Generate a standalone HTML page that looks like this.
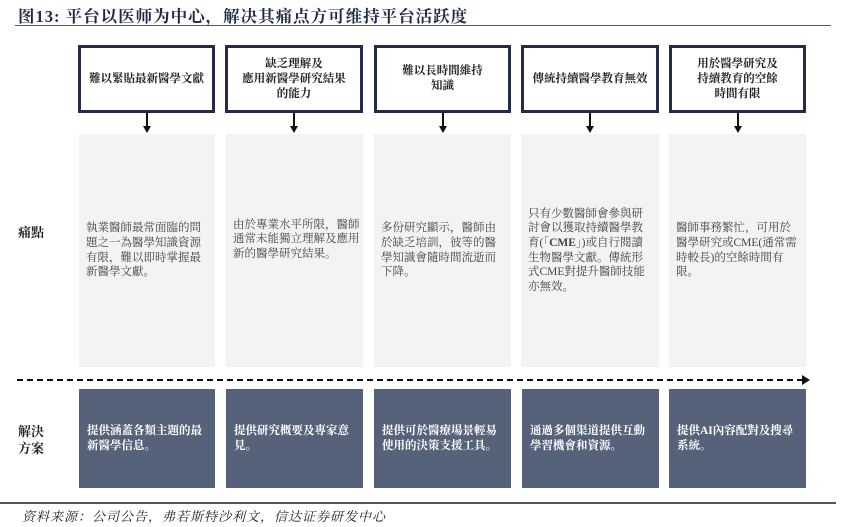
<!DOCTYPE html>
<html><head><meta charset="utf-8"><style>
*{margin:0;padding:0;box-sizing:border-box}
body{width:841px;height:527px;background:#fff;position:relative;overflow:hidden;font-family:"Liberation Serif","Noto Serif CJK SC",serif;color:#222}
.a{position:absolute}
.title{left:18px;top:3px;font-size:16.5px;font-weight:bold;color:#1f2a4a;letter-spacing:1px;font-family:"Liberation Serif","Noto Serif CJK SC",serif}
.hb{position:absolute;top:45px;height:68px;border:3px solid #222b4a;display:flex;align-items:center;justify-content:center;text-align:center;font-size:11.5px;font-weight:bold;line-height:15px;color:#222}
.gb{position:absolute;top:134px;height:233px;background:#f3f3f3;display:flex;align-items:center;padding:0 6px 0 7px;font-size:11.5px;line-height:14.6px;color:#444}
.bb{position:absolute;top:389px;height:99px;background:#56627a;display:flex;align-items:center;padding:0 7px 0 8px;font-size:11.5px;line-height:15px;color:#fff;font-weight:bold}
.ar{position:absolute;top:113px;width:2px;height:14px;background:#111}
.ah{position:absolute;top:126px;width:0;height:0;border-left:4px solid transparent;border-right:4px solid transparent;border-top:7px solid #111}
</style></head><body>
<div class="a title">图13: 平台以医师为中心，解决其痛点方可维持平台活跃度</div>
<div class="a" style="left:15px;top:25px;width:816px;height:1px;background:#555"></div>

<div class="hb" style="left:78px;width:137px"><div>難以緊貼最新醫學文獻</div></div>
<div class="hb" style="left:225px;width:138px"><div>缺乏理解及<br>應用新醫學研究結果<br>的能力</div></div>
<div class="hb" style="left:374px;width:137px"><div>難以長時間維持<br>知識</div></div>
<div class="hb" style="left:521px;width:138px"><div>傳統持續醫學教育無效</div></div>
<div class="hb" style="left:669px;width:137px"><div>用於醫學研究及<br>持續教育的空餘<br>時間有限</div></div>

<div class="ar" style="left:146px"></div><div class="ah" style="left:143px"></div>
<div class="ar" style="left:293px"></div><div class="ah" style="left:290px"></div>
<div class="ar" style="left:442px"></div><div class="ah" style="left:439px"></div>
<div class="ar" style="left:589px"></div><div class="ah" style="left:586px"></div>
<div class="ar" style="left:737px"></div><div class="ah" style="left:734px"></div>

<div class="a" style="left:18px;top:222px;font-size:13px;font-weight:bold">痛點</div>
<div class="gb" style="left:79px;width:136px"><div>執業醫師最常面臨的問題之一為醫學知識資源有限，難以即時掌握最新醫學文獻。</div></div>
<div class="gb" style="left:226px;width:137px;padding:0 1px 22px 7px"><div>由於專業水平所限，醫師通常未能獨立理解及應用新的醫學研究結果。</div></div>
<div class="gb" style="left:374px;width:137px"><div>多份研究顯示，醫師由於缺乏培訓，彼等的醫學知識會隨時間流逝而下降。</div></div>
<div class="gb" style="left:521px;width:138px"><div>只有少數醫師會參與研討會以獲取持續醫學教育(「<b>CME</b>」)或自行閱讀生物醫學文獻。傳統形式CME對提升醫師技能亦無效。</div></div>
<div class="gb" style="left:669px;width:137px"><div>醫師事務繁忙，可用於醫學研究或CME(通常需時較長)的空餘時間有限。</div></div>

<div class="a" style="left:17px;top:379px;width:786px;border-top:2px dashed #111"></div>
<div class="a" style="left:802px;top:375px;width:0;height:0;border-top:5px solid transparent;border-bottom:5px solid transparent;border-left:8px solid #111"></div>

<div class="a" style="left:18px;top:423px;font-size:13px;font-weight:bold;line-height:17px">解決<br>方案</div>
<div class="bb" style="left:79px;width:136px"><div>提供涵蓋各類主題的最新醫學信息。</div></div>
<div class="bb" style="left:226px;width:137px"><div>提供研究概要及專家意見。</div></div>
<div class="bb" style="left:374px;width:137px"><div>提供可於醫療場景輕易使用的決策支援工具。</div></div>
<div class="bb" style="left:522px;width:137px"><div>通過多個渠道提供互動學習機會和資源。</div></div>
<div class="bb" style="left:669px;width:137px"><div>提供AI內容配對及搜尋系統。</div></div>

<div class="a" style="left:0;top:502px;width:836px;height:2px;background:#555"></div>
<div class="a" style="left:22px;top:506px;font-size:13px;font-style:italic;color:#222;font-family:'Liberation Serif','Noto Serif CJK SC',serif;letter-spacing:1px">资料来源：公司公告，弗若斯特沙利文，信达证券研发中心</div>
</body></html>
